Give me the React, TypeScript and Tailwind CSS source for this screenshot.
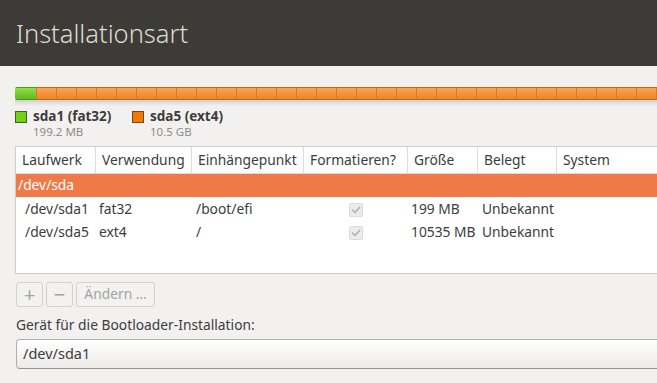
import React from "react";

const cols = [
  { label: "Laufwerk", w: "w-[80px]" },
  { label: "Verwendung", w: "w-[96px]" },
  { label: "Einhängepunkt", w: "w-[112px]" },
  { label: "Formatieren?", w: "w-[104px]" },
  { label: "Größe", w: "w-[70px]" },
  { label: "Belegt", w: "w-[79px]" },
  { label: "System", w: "flex-1" },
];

const rows = [
  { dev: "/dev/sda1", use: "fat32", mount: "/boot/efi", size: "199 MB", used: "Unbekannt" },
  { dev: "/dev/sda5", use: "ext4", mount: "/", size: "10535 MB", used: "Unbekannt" },
];

const CheckBox = () => (
  <div className="w-[14px] h-[14px] rounded-[2px] border border-[#dcdcdc] bg-[#ececec] flex items-center justify-center">
    <svg width="10" height="10" viewBox="0 0 10 10" fill="none">
      <path d="M1.5 5.2 L4 7.5 L8.6 2.4" stroke="#b4b4b4" strokeWidth="1.6" strokeLinecap="round" strokeLinejoin="round" />
    </svg>
  </div>
);

const PartitionBar = () => (
  <div className="relative">
    <div className="flex h-[13px] w-[660px] rounded-l-[2px] overflow-hidden">
      <div className="w-[21px] h-full shrink-0 bg-gradient-to-b from-[#8ee04a] to-[#62b81e] border-y border-[#4e9a06]" />
      {Array.from({ length: 32 }).map((_, i) => (
        <div
          key={i}
          className="w-[20px] h-full shrink-0 bg-gradient-to-b from-[#f9a54e] to-[#ec8526] border-y border-[#c0661a] border-l border-l-[#d77a2a]"
        />
      ))}
    </div>
    <div className="h-[6px] w-[660px] bg-gradient-to-b from-[#00000024] to-transparent" />
  </div>
);

const Legend = ({ color, border, name, size, w }: { color: string; border: string; name: string; size: string; w: string }) => (
  <div className={`flex ${w}`}>
    <div className={`w-[12px] h-[12px] mt-[3px] shrink-0 border ${color} ${border}`} />
    <div className="ml-[6px] flex flex-col">
      <span className="font-bold text-[13.5px] leading-[17px]">{name}</span>
      <span className="text-[11.5px] text-[#8c8c8c] leading-[13px]">{size}</span>
    </div>
  </div>
);

export default function App() {
  return (
    <div
      className="w-[657px] h-[383px] overflow-hidden bg-[#f2f1f0] text-[#3c3c3c]"
      style={{ fontFamily: '"Noto Sans", "Open Sans", sans-serif' }}
    >
      {/* Header */}
      <div className="h-[66px] bg-[#3c3b37] flex items-center px-[16px]">
        <h1 className="text-[25.5px] font-light text-[#dfdbd2]">Installationsart</h1>
      </div>

      <div className="pl-[15px] pt-[21px]">
        <PartitionBar />

        {/* Legend */}
        <div className="flex mt-[2px]">
          <Legend color="bg-[#73d216]" border="border-[#4a5a2a]" name="sda1 (fat32)" size="199.2 MB" w="w-[117px]" />
          <Legend color="bg-[#f57900]" border="border-[#6a4a2a]" name="sda5 (ext4)" size="10.5 GB" w="" />
        </div>

        {/* Table */}
        <div className="mt-[8px] h-[128px] bg-white border-y border-l border-[#cdcdcd] text-[13.8px]">
          <div className="flex h-[27px] border-b border-[#dcdcdc]">
            {cols.map((c, i) => (
              <div
                key={c.label}
                className={`${c.w} shrink-0 flex items-center pl-[6px] ${i < cols.length - 1 ? "border-r border-[#dcdcdc]" : ""}`}
              >
                {c.label}
              </div>
            ))}
          </div>
          <div className="h-[23px] bg-[#ef7a48] text-white flex items-center pl-[2px]">/dev/sda</div>
          <div className="pt-[1px]">
            {rows.map((r) => (
              <div key={r.dev} className="flex h-[23px] items-center">
                <div className="w-[80px] pl-[9px] shrink-0">{r.dev}</div>
                <div className="w-[96px] pl-[3px] shrink-0">{r.use}</div>
                <div className="w-[112px] pl-[4px] shrink-0">{r.mount}</div>
                <div className="w-[104px] shrink-0 flex justify-center">
                  <CheckBox />
                </div>
                <div className="w-[70px] pl-[3px] shrink-0">{r.size}</div>
                <div className="w-[79px] pl-[4px] shrink-0">{r.used}</div>
              </div>
            ))}
          </div>
        </div>

        {/* Buttons */}
        <div className="flex gap-[3px] mt-[8px] ml-[1px] text-[13.8px] text-[#a3a3a3]">
          <div className="w-[27px] h-[25px] rounded-[3px] border border-[#d3d3d3] bg-[#f3f2f1] flex items-center justify-center text-[20px] leading-none">+</div>
          <div className="w-[27px] h-[25px] rounded-[3px] border border-[#d3d3d3] bg-[#f3f2f1] flex items-center justify-center text-[20px] leading-none">−</div>
          <div className="w-[79px] h-[25px] rounded-[3px] border border-[#d3d3d3] bg-[#f3f2f1] flex items-center justify-center">Ändern …</div>
        </div>

        <div className="mt-[8px] ml-[1px] text-[13.8px] leading-[19px]">Gerät für die Bootloader-Installation:</div>

        <div className="mt-[5px] ml-[1px] h-[30px] w-[660px] rounded-[4px] border border-[#b0b0b0] border-b-[#949494] bg-gradient-to-b from-white to-[#ebeae8] flex items-center pl-[6px] text-[14.5px]">
          /dev/sda1
        </div>
      </div>
    </div>
  );
}
